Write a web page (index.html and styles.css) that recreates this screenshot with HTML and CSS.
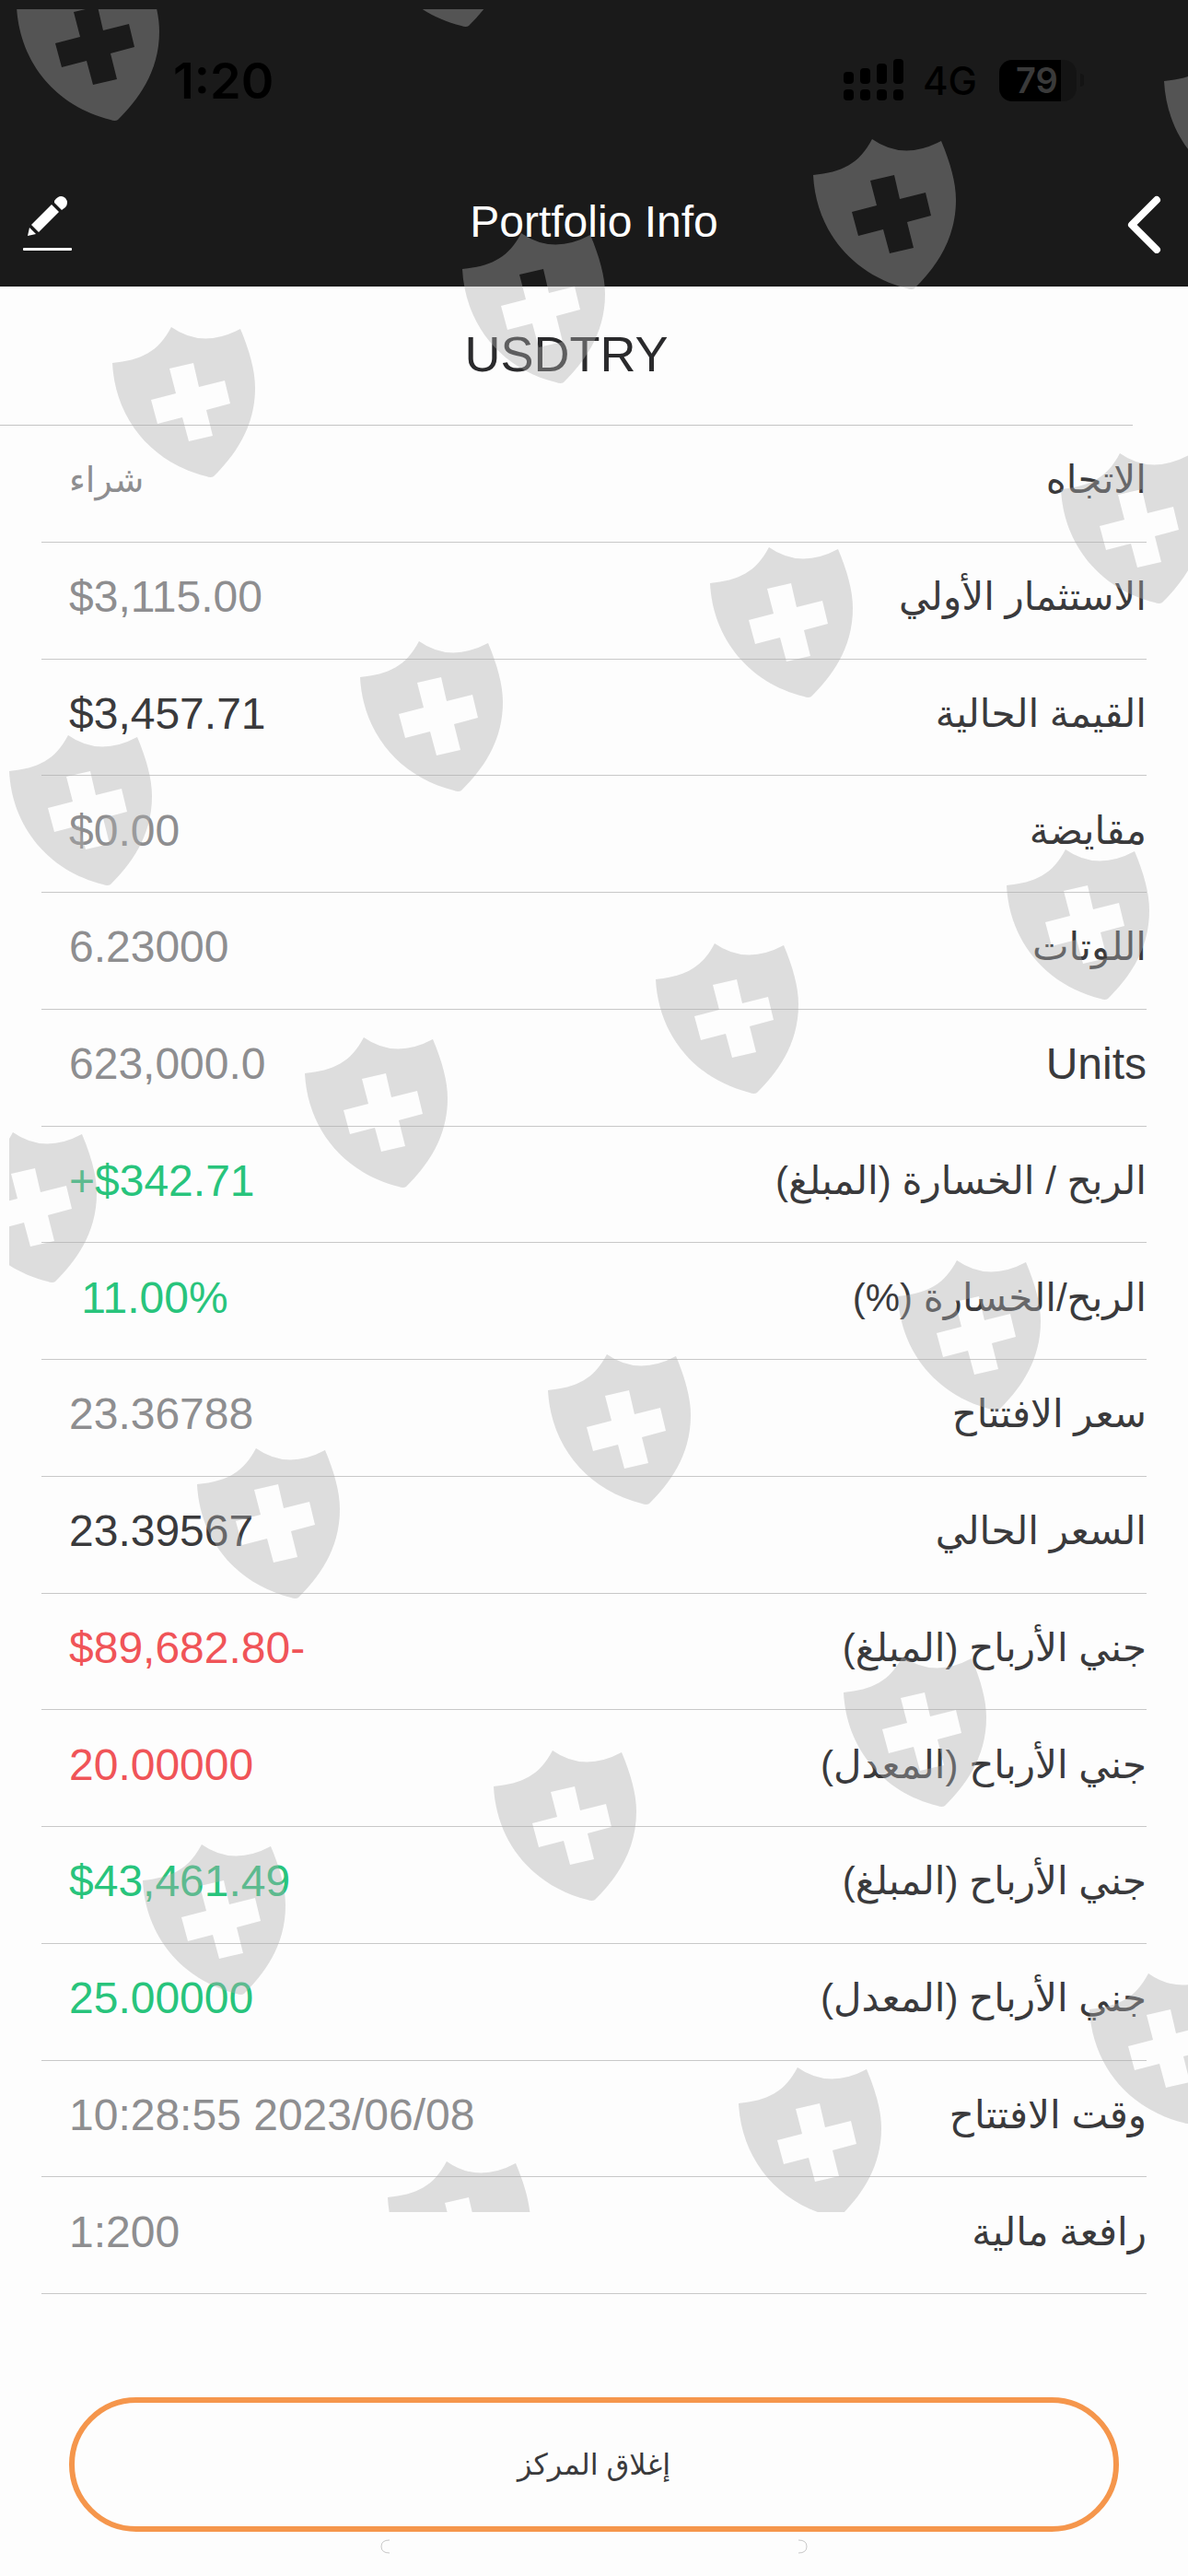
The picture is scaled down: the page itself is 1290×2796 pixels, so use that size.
FILE: index.html
```html
<!DOCTYPE html>
<html lang="ar" dir="rtl">
<head>
    <meta charset="UTF-8">
    <meta name="viewport" content="width=device-width, initial-scale=1.0">
    <title>Portfolio Info</title>

    <link rel="stylesheet" href="styles.css">
</head>
<body>

    <header class="top" dir="ltr">
        <div class="status-bar">
            <span class="clock">1:20</span>
            <div class="status-icons">
                <svg class="signal" width="66" height="46" viewBox="0 0 66 46" aria-hidden="true">
                    <rect x="0" y="14" width="11" height="13" rx="4"/>
                    <rect x="18" y="10" width="11" height="17" rx="4"/>
                    <rect x="36" y="5" width="11" height="22" rx="4"/>
                    <rect x="54" y="0" width="11" height="27" rx="4"/>
                    <rect x="0" y="33" width="11" height="12" rx="4"/>
                    <rect x="18" y="33" width="11" height="12" rx="4"/>
                    <rect x="36" y="33" width="11" height="12" rx="4"/>
                    <rect x="54" y="33" width="11" height="12" rx="4"/>
                </svg>
                <span class="network">4G</span>
                <span class="battery">79</span>
                <span class="battery-cap"></span>
            </div>
        </div>
        <nav class="nav-bar">
            <button type="button" class="icon-button" aria-label="Edit">
                <svg width="54" height="62" viewBox="0 0 54 62" aria-hidden="true">
                    <path fill="#fff" d="M34 6 Q40 -2 46 3 Q50 8 46 13 L42 16 L34 8 Z"/>
                    <path fill="#fff" d="M31 10 L39 18 L17 40 L9 32 Z"/>
                    <path fill="#fff" d="M7 35 L14 42 L5 44 Z"/>
                    <rect fill="#fff" x="0" y="57" width="53" height="3" rx="1"/>
                </svg>
            </button>
            <h1 class="nav-title">Portfolio Info</h1>
            <button type="button" class="icon-button" aria-label="Back">
                <svg width="54" height="64" viewBox="0 0 54 64" aria-hidden="true">
                    <path fill="none" stroke="#fff" stroke-width="8" stroke-linecap="round" stroke-linejoin="round" d="M45 6 L18 33 L45 60"/>
                </svg>
            </button>
        </nav>
    </header>

    <main class="content">
        <h2 class="symbol">USDTRY</h2>

        <dl class="info-list">
            <div class="row"><dt>الاتجاه</dt><dd class="arabic">شراء</dd></div>
            <div class="row"><dt>الاستثمار الأولي</dt><dd dir="ltr">$3,115.00</dd></div>
            <div class="row"><dt>القيمة الحالية</dt><dd class="dark" dir="ltr">$3,457.71</dd></div>
            <div class="row"><dt>مقايضة</dt><dd dir="ltr">$0.00</dd></div>
            <div class="row"><dt>اللوتات</dt><dd dir="ltr">6.23000</dd></div>
            <div class="row"><dt class="latin">Units</dt><dd dir="ltr">623,000.0</dd></div>
            <div class="row"><dt>الربح / الخسارة (المبلغ)</dt><dd class="green" dir="ltr">+$342.71</dd></div>
            <div class="row"><dt>الربح/الخسارة (%)</dt><dd class="green" dir="ltr">&nbsp;11.00%</dd></div>
            <div class="row"><dt>سعر الافتتاح</dt><dd dir="ltr">23.36788</dd></div>
            <div class="row"><dt>السعر الحالي</dt><dd class="dark" dir="ltr">23.39567</dd></div>
            <div class="row"><dt>جني الأرباح (المبلغ)</dt><dd class="red" dir="ltr">$89,682.80-</dd></div>
            <div class="row"><dt>جني الأرباح (المعدل)</dt><dd class="red" dir="ltr">20.00000</dd></div>
            <div class="row"><dt>جني الأرباح (المبلغ)</dt><dd class="green" dir="ltr">$43,461.49</dd></div>
            <div class="row"><dt>جني الأرباح (المعدل)</dt><dd class="green" dir="ltr">25.00000</dd></div>
            <div class="row"><dt>وقت الافتتاح</dt><dd dir="ltr">10:28:55 2023/06/08</dd></div>
            <div class="row"><dt>رافعة مالية</dt><dd dir="ltr">1:200</dd></div>
        </dl>
    </main>

    <footer class="bottom">
        <button type="button" class="close-button">إغلاق المركز</button>
        <div class="home-indicator">
            <svg width="12" height="16" viewBox="0 0 12 16" aria-hidden="true"><path d="M2 1 Q11 1 11 8 Q11 15 2 15"/></svg>
            <svg width="12" height="16" viewBox="0 0 12 16" aria-hidden="true"><path d="M10 1 Q1 1 1 8 Q1 15 10 15"/></svg>
        </div>
    </footer>

    <!-- Shield watermark over the whole page -->
    <svg class="watermark" viewBox="10 10 1280 2391" aria-hidden="true">
        <defs>
            <path id="shield" fill-rule="evenodd" d="M0 40 C31 37 50 28 64 1 Q98 25 139 3 C149 27 155 48 155 67 C155 112 131 142 110 163 Q107 165 102 163 C42 148 3 100 0 40 Z M88 40 L62 46 L69 73 L42 80 L49 106 L76 99 L83 125 L109 119 L102 91 L128 84 L122 59 L94 66 Z"/>
        </defs>
        <use href="#shield" x="18" y="-33"/>
        <use href="#shield" x="399" y="-135"/>
        <use href="#shield" x="1264" y="48"/>
        <use href="#shield" x="883" y="150"/>
        <use href="#shield" x="502" y="252"/>
        <use href="#shield" x="122" y="354"/>
        <use href="#shield" x="1152" y="491"/>
        <use href="#shield" x="771" y="593"/>
        <use href="#shield" x="391" y="695"/>
        <use href="#shield" x="10" y="797"/>
        <use href="#shield" x="1093" y="921"/>
        <use href="#shield" x="712" y="1023"/>
        <use href="#shield" x="331" y="1125"/>
        <use href="#shield" x="-50" y="1228"/>
        <use href="#shield" x="975" y="1367"/>
        <use href="#shield" x="595" y="1469"/>
        <use href="#shield" x="214" y="1571"/>
        <use href="#shield" x="916" y="1797"/>
        <use href="#shield" x="536" y="1899"/>
        <use href="#shield" x="155" y="2001"/>
        <use href="#shield" x="1183" y="2141"/>
        <use href="#shield" x="802" y="2243"/>
        <use href="#shield" x="421" y="2345"/>
    </svg>

</body>
</html>
```

FILE: styles.css
```css
* {
    box-sizing: border-box;
}

body {
    font-family: "Liberation Sans", "DejaVu Sans", Arial, sans-serif;
    margin: 0;
    min-height: 100vh;
    background-color: #fdfdfd;
    color: #3a3a3c;
    font-size: 48px;
    display: flex;
    flex-direction: column;
    position: relative;
}

button {
    font-family: inherit;
    color: inherit;
    cursor: pointer;
}

/* Dark header */
.top {
    background-color: #1a1a1a;
}

.status-bar {
    display: flex;
    align-items: center;
    justify-content: space-between;
    height: 174px;
    padding: 0 113px 0 188px;
    color: #000;
    font-family: "Inter", sans-serif;
}

.clock {
    font-size: 54px;
    font-weight: 600;
}

.status-icons {
    display: flex;
    align-items: center;
}

.network {
    font-size: 42px;
    font-weight: 500;
    margin: 0 24px 0 20px;
}

.battery {
    width: 84px;
    padding-left: 18px;
    border-radius: 14px;
    background: linear-gradient(to right, #000 80%, #141414 80%);
    color: #3a3a3a;
    font-size: 38px;
    font-weight: 600;
    line-height: 45px;
}

.battery-cap {
    width: 4px;
    height: 14px;
    margin: 0 0 0 4px;
    border-radius: 0 4px 4px 0;
    background-color: #141414;
}

.nav-bar {
    display: flex;
    align-items: center;
    justify-content: space-between;
    height: 137px;
    padding: 0 25px;
}

.nav-title {
    margin: 0;
    padding-bottom: 4px;
    color: #fff;
    font-size: 48px;
    font-weight: normal;
}

.icon-button {
    display: flex;
    padding: 0;
    border: none;
    background: none;
}

/* Instrument and its details */
.content {
    flex: 1;
    display: flex;
    flex-direction: column;
}

.symbol {
    margin: 0;
    margin-right: 60px;
    padding-bottom: 4px;
    border-bottom: 1px solid #c4c4c4;
    color: #2a2a2c;
    font-size: 54px;
    font-weight: normal;
    line-height: 146px;
    text-align: center;
}

.info-list {
    flex: 1;
    display: grid;
    grid-auto-rows: 1fr;
    margin: 0 45px;
}

.row {
    display: flex;
    align-items: center;
    justify-content: space-between;
    padding-bottom: 8px;
    border-bottom: 1px solid #c8c8c8;
}

dt {
    font-size: 42px;
}

dt.latin {
    font-size: 48px;
}

dd {
    margin: 0 0 0 30px;
    color: #8e8e90;
}

dd.arabic {
    font-size: 38px;
}

.dark {
    color: #3a3a3c;
}

.green {
    color: #28c47c;
}

.red {
    color: #f05458;
}

/* Close position */
.bottom {
    padding: 112px 75px 24px;
}

.close-button {
    display: block;
    width: 100%;
    height: 146px;
    border: 6px solid #f5964c;
    border-radius: 73px;
    background: none;
    font-size: 32px;
}

.home-indicator {
    display: flex;
    justify-content: space-between;
    width: 464px;
    max-width: 100%;
    margin: 8px auto 0;
    fill: none;
    stroke: #c8c8c8;
}

.watermark {
    position: absolute;
    top: 10px;
    right: 0;
    width: calc(100% - 10px);
    fill: rgba(173, 173, 173, 0.4);
    pointer-events: none;
}
```
